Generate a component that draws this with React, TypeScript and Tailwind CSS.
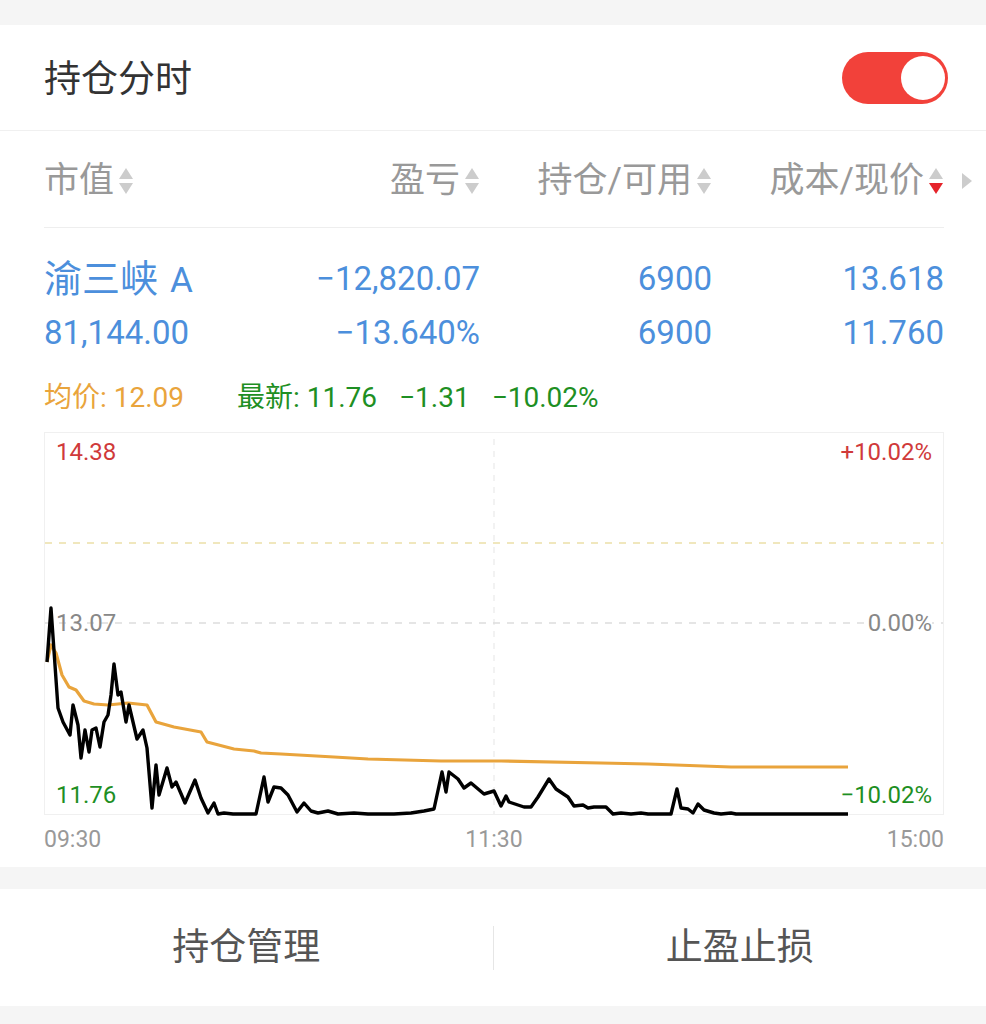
import React from "react";

const font = "font-['Roboto','Noto_Sans_CJK_SC',sans-serif]";

const pricePts = [
  [2, 229], [6, 175], [13, 275], [18, 289], [25, 302], [28, 272], [33, 292], [36, 325],
  [40, 297], [44, 319], [47, 297], [51, 295], [55, 314], [59, 289], [63, 282], [66, 262],
  [69, 231], [73, 262], [76, 259], [81, 289], [84, 272], [92, 306], [98, 297], [102, 315],
  [107, 375], [111, 332], [114, 362], [122, 335], [127, 354], [131, 349], [140, 370],
  [150, 347], [156, 365], [163, 380], [169, 370], [173, 381], [179, 380], [188, 381],
  [211, 381], [219, 344], [223, 369], [229, 354], [236, 355], [243, 362], [252, 379],
  [259, 370], [266, 378], [273, 380], [283, 378], [293, 381], [309, 380], [323, 381],
  [349, 381], [366, 380], [379, 378], [389, 376], [397, 339], [401, 359], [404, 339],
  [413, 346], [419, 355], [426, 350], [439, 361], [449, 358], [456, 373], [461, 363],
  [464, 369], [473, 372], [479, 374], [486, 374], [493, 364], [504, 346], [511, 356],
  [523, 364], [529, 373], [538, 372], [543, 375], [549, 374], [561, 374], [568, 381],
  [576, 380], [586, 381], [596, 380], [603, 381], [626, 381], [632, 356], [636, 375],
  [643, 376], [648, 380], [653, 371], [659, 377], [669, 380], [676, 381], [686, 380],
  [691, 381], [803, 381],
];

const avgPts = [
  [2, 229], [6, 212], [11, 220], [17, 242], [24, 254], [31, 257], [39, 268], [49, 271],
  [63, 272], [83, 270], [102, 272], [111, 289], [129, 294], [156, 299], [162, 309],
  [189, 316], [209, 318], [216, 320], [236, 321], [289, 324], [323, 326], [396, 328],
  [456, 328], [556, 330], [603, 331], [686, 334], [803, 334],
];

const toPath = (pts: number[][]) => pts.map((p) => p.join(",")).join(" ");

function SortArrows({ down = false }: { down?: boolean }) {
  return (
    <svg width="16" height="28" viewBox="0 0 16 28" className="ml-[4px] shrink-0">
      <polygon points="8,1 15,12 1,12" fill="#cccccc" />
      <polygon points="1,16 15,16 8,27" fill={down ? "#e5242b" : "#cccccc"} />
    </svg>
  );
}

function HeadCell({ label, align, down }: { label: string; align: "left" | "right"; down?: boolean }) {
  return (
    <div className={`flex items-center ${align === "right" ? "justify-end" : "justify-start"}`}>
      <span>{label}</span>
      <SortArrows down={down} />
    </div>
  );
}

export default function App() {
  return (
    <div className={`w-[986px] h-[1024px] bg-[#f5f5f5] ${font}`}>
      <div className="h-[25px]" />
      <div className="bg-white">
        <div className="h-[106px] flex items-center justify-between pl-[44px] pr-[38px] border-b border-[#f0f0f0]">
          <span className="text-[37px] text-[#333333] pt-[5px]">持仓分时</span>
          <div className="w-[106px] h-[52px] rounded-full bg-[#f2413a] flex items-center justify-end pr-[3px]">
            <div className="w-[44px] h-[44px] rounded-full bg-white" />
          </div>
        </div>

        <div className="pl-[44px]">
          <div className="flex items-center h-[96px] pt-[4px]">
            <div className="grid grid-cols-[220px_216px_232px_232px] text-[35px] text-[#999999]">
              <HeadCell label="市值" align="left" />
              <HeadCell label="盈亏" align="right" />
              <HeadCell label="持仓/可用" align="right" />
              <HeadCell label="成本/现价" align="right" down />
            </div>
            <svg width="12" height="20" viewBox="0 0 12 20" className="ml-[17px]">
              <polygon points="1,2 11,10 1,18" fill="#cccccc" />
            </svg>
          </div>
          <div className="w-[900px] h-px bg-[#eeeeee]" />

          <div className="pt-[25px] grid grid-cols-[220px_216px_232px_232px] text-[33px] leading-[52px] text-[#4c8fdc] w-[900px]">
            <div>
              <span className="text-[38px]">渝三峡</span>
              <span className="text-[35px] ml-[12px]">A</span>
            </div>
            <div className="text-right">−12,820.07</div>
            <div className="text-right">6900</div>
            <div className="text-right">13.618</div>
            <div>81,144.00</div>
            <div className="text-right">−13.640%</div>
            <div className="text-right">6900</div>
            <div className="text-right">11.760</div>
          </div>

          <div className="mt-[21px] flex items-center h-[36px] text-[28px]">
            <span className="text-[#e9a43c] w-[193px]">均价: 12.09</span>
            <span className="text-[#1e8f23]">最新: 11.76</span>
            <span className="text-[#1e8f23] ml-[22px]">−1.31</span>
            <span className="text-[#1e8f23] ml-[22px]">−10.02%</span>
          </div>

          <div className="mt-[16px] relative w-[900px] h-[383px] border border-[#f0f0f0]">
            <svg width="898" height="381" viewBox="0 0 898 381" className="block overflow-visible">
              <line x1="449" y1="6" x2="449" y2="381" stroke="#eeeeee" strokeWidth="1.5" strokeDasharray="6 6" />
              <line x1="0" y1="110" x2="898" y2="110" stroke="#ece0a8" strokeWidth="1.5" strokeDasharray="7 7" />
              <line x1="0" y1="190" x2="898" y2="190" stroke="#dddddd" strokeWidth="1.5" strokeDasharray="7 7" />
              <polyline points={toPath(avgPts)} fill="none" stroke="#e9a43c" strokeWidth="3.2" strokeLinejoin="round" />
              <polyline points={toPath(pricePts)} fill="none" stroke="#000000" strokeWidth="3.4" strokeLinejoin="round" />
            </svg>
            <span className="absolute left-[11px] top-[4px] text-[24px] leading-[30px] text-[#d03a3a]">14.38</span>
            <span className="absolute right-[11px] top-[4px] text-[24px] leading-[30px] text-[#d03a3a]">+10.02%</span>
            <span className="absolute left-[11px] top-[175px] text-[24px] leading-[30px] text-[#888888]">13.07</span>
            <span className="absolute right-[11px] top-[175px] text-[24px] leading-[30px] text-[#888888] bg-white pl-[2px]">0.00%</span>
            <span className="absolute left-[11px] top-[347px] text-[24px] leading-[30px] text-[#1e8f23]">11.76</span>
            <span className="absolute right-[11px] top-[347px] text-[24px] leading-[30px] text-[#1e8f23]">−10.02%</span>
          </div>

          <div className="w-[900px] flex justify-between h-[28px] mt-[11px] text-[23px] leading-[28px] text-[#999999]">
            <span>09:30</span>
            <span>11:30</span>
            <span>15:00</span>
          </div>
          <div className="h-[13px]" />
        </div>
      </div>

      <div className="h-[22px]" />

      <div className="bg-white h-[117px] flex items-center">
        <div className="flex-1 text-center text-[37px] text-[#555555]">持仓管理</div>
        <div className="w-px h-[44px] bg-[#e6e6e6]" />
        <div className="flex-1 text-center text-[37px] text-[#555555]">止盈止损</div>
      </div>
    </div>
  );
}
